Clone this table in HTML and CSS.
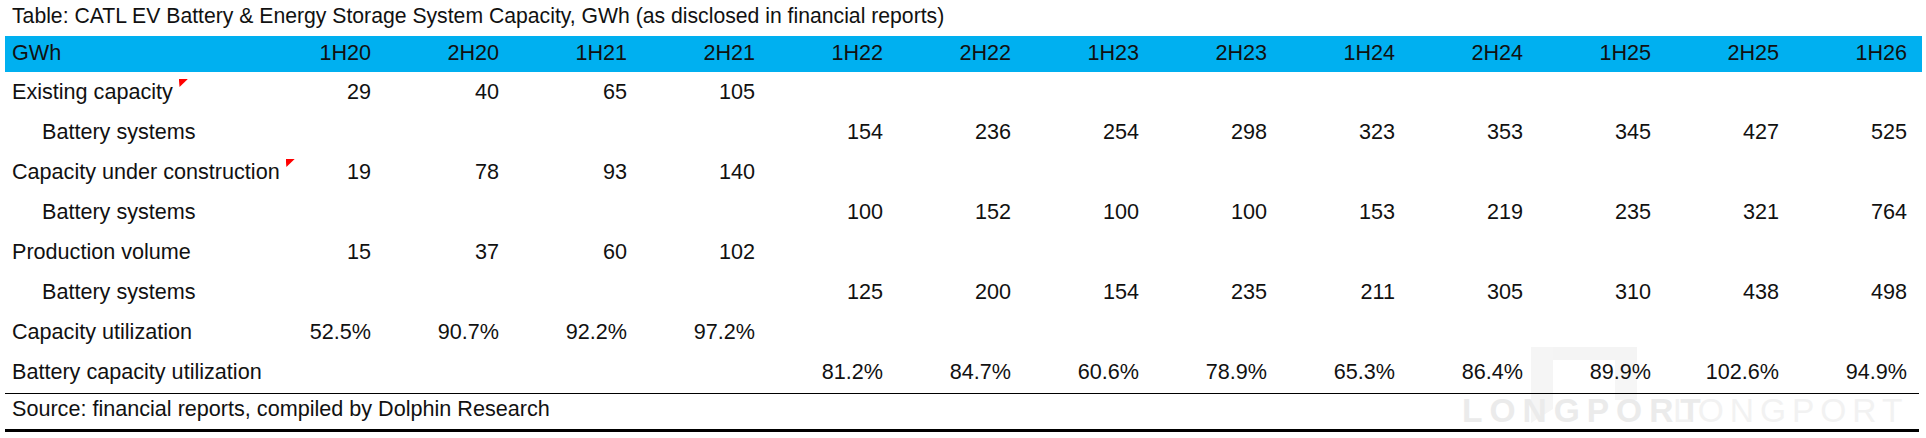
FILE: index.html
```html
<!DOCTYPE html>
<html lang="en">
<head>
<meta charset="utf-8">
<title>CATL Capacity</title>
<link rel="stylesheet" href="styles.css">
</head>
<body>
<div class="page">
  <div class="title">Table: CATL EV Battery &amp; Energy Storage System Capacity, GWh (as disclosed in financial reports)</div>
  <div class="grid head">
    <div class="lbl">GWh</div>
    <div class="num">1H20</div><div class="num">2H20</div><div class="num">1H21</div><div class="num">2H21</div>
    <div class="num">1H22</div><div class="num">2H22</div><div class="num">1H23</div><div class="num">2H23</div>
    <div class="num">1H24</div><div class="num">2H24</div><div class="num">1H25</div><div class="num">2H25</div><div class="num">1H26</div>
  </div>
  <div class="grid row">
    <div class="lbl">Existing capacity<span class="mark"></span></div>
    <div class="num">29</div><div class="num">40</div><div class="num">65</div><div class="num">105</div>
    <div class="num"></div><div class="num"></div><div class="num"></div><div class="num"></div><div class="num"></div><div class="num"></div><div class="num"></div><div class="num"></div><div class="num"></div>
  </div>
  <div class="grid row">
    <div class="lbl sub">Battery systems</div>
    <div class="num"></div><div class="num"></div><div class="num"></div><div class="num"></div>
    <div class="num">154</div><div class="num">236</div><div class="num">254</div><div class="num">298</div><div class="num">323</div><div class="num">353</div><div class="num">345</div><div class="num">427</div><div class="num">525</div>
  </div>
  <div class="grid row">
    <div class="lbl">Capacity under construction<span class="mark"></span></div>
    <div class="num">19</div><div class="num">78</div><div class="num">93</div><div class="num">140</div>
    <div class="num"></div><div class="num"></div><div class="num"></div><div class="num"></div><div class="num"></div><div class="num"></div><div class="num"></div><div class="num"></div><div class="num"></div>
  </div>
  <div class="grid row">
    <div class="lbl sub">Battery systems</div>
    <div class="num"></div><div class="num"></div><div class="num"></div><div class="num"></div>
    <div class="num">100</div><div class="num">152</div><div class="num">100</div><div class="num">100</div><div class="num">153</div><div class="num">219</div><div class="num">235</div><div class="num">321</div><div class="num">764</div>
  </div>
  <div class="grid row">
    <div class="lbl">Production volume</div>
    <div class="num">15</div><div class="num">37</div><div class="num">60</div><div class="num">102</div>
    <div class="num"></div><div class="num"></div><div class="num"></div><div class="num"></div><div class="num"></div><div class="num"></div><div class="num"></div><div class="num"></div><div class="num"></div>
  </div>
  <div class="grid row">
    <div class="lbl sub">Battery systems</div>
    <div class="num"></div><div class="num"></div><div class="num"></div><div class="num"></div>
    <div class="num">125</div><div class="num">200</div><div class="num">154</div><div class="num">235</div><div class="num">211</div><div class="num">305</div><div class="num">310</div><div class="num">438</div><div class="num">498</div>
  </div>
  <div class="grid row">
    <div class="lbl">Capacity utilization</div>
    <div class="num">52.5%</div><div class="num">90.7%</div><div class="num">92.2%</div><div class="num">97.2%</div>
    <div class="num"></div><div class="num"></div><div class="num"></div><div class="num"></div><div class="num"></div><div class="num"></div><div class="num"></div><div class="num"></div><div class="num"></div>
  </div>
  <div class="grid row">
    <div class="lbl">Battery capacity utilization</div>
    <div class="num"></div><div class="num"></div><div class="num"></div><div class="num"></div>
    <div class="num">81.2%</div><div class="num">84.7%</div><div class="num">60.6%</div><div class="num">78.9%</div><div class="num">65.3%</div><div class="num">86.4%</div><div class="num">89.9%</div><div class="num">102.6%</div><div class="num">94.9%</div>
  </div>
  <div class="source">Source: financial reports, compiled by Dolphin Research</div>

  <div class="watermark" aria-hidden="true">
    <svg class="wm-logo" width="108" height="78" viewBox="0 0 108 78">
      <rect x="22" y="0" width="84" height="13" fill="#f4f4f4"/>
      <rect x="0" y="0" width="22" height="62" fill="#f5f5f5"/>
      <polygon points="0,62 22,62 0,76" fill="#f5f5f5"/>
      <rect x="84" y="13" width="22" height="40" fill="#f6f6f6"/>
    </svg>
    <span class="wm-a">LONGPORT</span>
    <span class="wm-b">LONGPORT</span>
  </div>
</div>
</body>
</html>
```

FILE: styles.css
```css
html, body {
  margin: 0;
  padding: 0;
  background: #ffffff;
}

body {
  font-family: "Liberation Sans", Arial, sans-serif;
  font-size: 21.6px;
  color: #111111;
}

.page {
  position: relative;
  width: 1917px;
  margin-left: 5px;
  height: 438px;
}

.title {
  padding: 3px 0 7px 7px;
  font-size: 21.2px;
  line-height: 26px;
  height: 26px;
  white-space: nowrap;
}

.grid {
  display: grid;
  grid-template-columns: 253px repeat(13, 128px);
  position: relative;
  z-index: 1;
}

.head {
  background: #00b0f0;
  height: 36px;
  line-height: 33px;
}

.row {
  height: 40px;
  line-height: 40px;
}

.lbl {
  padding-left: 7px;
  white-space: nowrap;
}

.lbl.sub {
  padding-left: 37px;
}

.num {
  text-align: right;
  padding-right: 15px;
  white-space: nowrap;
}

.mark {
  display: inline-block;
  width: 9px;
  height: 8px;
  margin-left: 6px;
  vertical-align: top;
  margin-top: 7px;
  background: #ff0000;
  clip-path: polygon(0 0, 100% 0, 8% 100%);
}

.source {
  position: relative;
  z-index: 1;
  margin-top: 1px;
  width: 1907px;
  border-top: 1px solid #000000;
  border-bottom: 3px solid #000000;
  height: 35px;
  line-height: 30px;
  padding-left: 7px;
}

.watermark {
  position: absolute;
  left: 1452px;
  top: 342px;
  width: 460px;
  height: 90px;
  z-index: 0;
}

.wm-logo {
  position: absolute;
  left: 74px;
  top: 5px;
}

.wm-a {
  position: absolute;
  left: 5px;
  top: 51px;
  font-size: 33.5px;
  font-weight: bold;
  letter-spacing: 7px;
  color: #ebebeb;
  line-height: 36px;
}

.wm-b {
  position: absolute;
  left: 216px;
  top: 51px;
  font-size: 33.5px;
  letter-spacing: 6px;
  color: #f2f2f2;
  line-height: 36px;
}
```
